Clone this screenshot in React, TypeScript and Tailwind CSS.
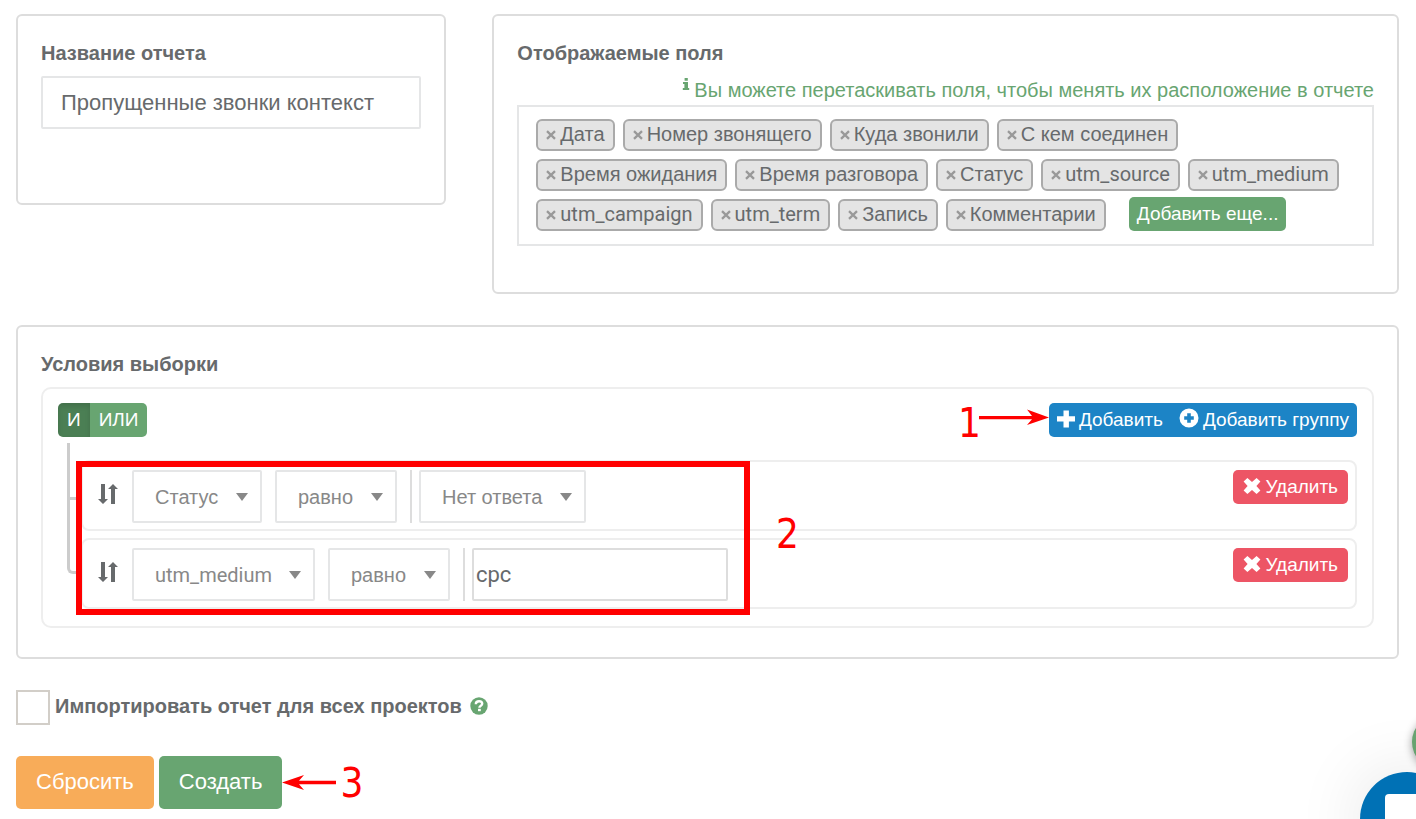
import React, { useState } from "react";

const initialFields = [
  "Дата",
  "Номер звонящего",
  "Куда звонили",
  "С кем соединен",
  "Время ожидания",
  "Время разговора",
  "Статус",
  "utm_source",
  "utm_medium",
  "utm_campaign",
  "utm_term",
  "Запись",
  "Комментарии",
];

const fieldFont = (field: string) =>
  field.startsWith("utm_") ? "font-[Roboto,sans-serif]" : "";

const PlusIcon = () => (
  <svg viewBox="0 0 18 18" className="mb-0.5 w-[18px] h-[18px]" fill="currentColor">
    <path d="M6.5 0.5h5.4v5.8H18v5.2h-6.1v6H6.5v-6H0V6.3h6.5z" />
  </svg>
);

const PlusCircleIcon = () => (
  <svg viewBox="0 0 20 20" className="mb-1 w-5 h-5" fill="currentColor">
    <path
      fillRule="evenodd"
      d="M10 0.5a9.5 9.5 0 1 1 0 19a9.5 9.5 0 0 1 0-19zM8.2 5.2v3H5.2v3.6h3v3h3.6v-3h3V8.2h-3v-3z"
    />
  </svg>
);

const RemoveIcon = () => (
  <svg viewBox="0 0 18 18" className="mb-0.5 w-[18px] h-[18px]" fill="currentColor">
    <path d="M4.4 1 9 5 13.6 1 17.4 4.6 13.4 9 17.4 13.4 13.6 17 9 13 4.4 17 0.6 13.4 4.6 9 0.6 4.6z" />
  </svg>
);

const CrossIcon = () => (
  <svg viewBox="0 0 10 10" className="w-2.5 h-2.5" fill="none" stroke="currentColor" strokeWidth="2.3">
    <path d="M1 1.2 9 8.8M9 1.2 1 8.8" />
  </svg>
);

const InfoIcon = () => (
  <svg viewBox="0 0 8 12" className="mt-0.5 w-2 h-3" fill="currentColor">
    <path d="M2.6 0h3.2v2.8H2.6zM1 4h5v6h1.2v2H0.8v-2H2.4V6H1z" />
  </svg>
);

const SortIcon = () => (
  <svg viewBox="0 0 20 22" className="w-5 h-[22px]" fill="currentColor">
    <path d="M3 1h4v15h3L5 21 0 16h3zM13 21h4V6h3L15 1 10 6h3z" />
  </svg>
);

const QuestionIcon = () => (
  <svg viewBox="0 0 18 18" className="w-[18px] h-[18px]">
    <circle cx="9" cy="9" r="8.7" fill="#68a571" />
    <path
      d="M5.8 7.2C5.8 5.2 7.2 4.2 9.1 4.2s3.1 1 3.1 2.6c0 2-2.8 1.9-2.8 3.9"
      fill="none"
      stroke="#fff"
      strokeWidth="2.4"
    />
    <path d="M8 11.8h2.8v2.4H8z" fill="#fff" />
  </svg>
);

interface DropdownProps {
  label: string;
  value: string;
}

const Dropdown: React.FC<DropdownProps> = ({ label, value }) => (
  <div className="relative">
    <select
      aria-label={label}
      defaultValue={value}
      className={`h-[53px] appearance-none rounded-xs border-2 border-[#e5e6e7] bg-white pl-[21px] pr-[41px] text-xl text-[#888] ${fieldFont(value)}`}>
      <option>{value}</option>
    </select>
    <svg
      viewBox="0 0 12 8"
      className="pointer-events-none absolute right-3.5 top-[23px] w-3 h-2"
      fill="#888">
      <path d="M0 0h12L6 8z" />
    </svg>
  </div>
);

interface RuleProps {
  field: string;
  children: React.ReactNode;
}

const Rule: React.FC<RuleProps> = ({ field, children }) => (
  <div className="flex items-start rounded-lg border-2 border-[#eee] pt-2 pb-1.5 pl-[15px] pr-[7px]">
    <button aria-label="Переместить" className="mt-[13px] mr-3.5 text-[#676a6c]">
      <SortIcon />
    </button>
    <div className="flex">
      <Dropdown label="Поле" value={field} />
      <div className="ml-[13px]">
        <Dropdown label="Оператор" value="равно" />
      </div>
      <div className="ml-[13px] border-l-2 border-[#ddd] pl-[7px]">{children}</div>
    </div>
    <button className="ml-auto flex h-[34px] items-center gap-1 rounded-[5px] bg-[#ed5565] px-2.5 text-[19px] text-white">
      <RemoveIcon />
      Удалить
    </button>
  </div>
);

const App: React.FC = () => {
  const [name, setName] = useState("Пропущенные звонки контекст");
  const [fields, setFields] = useState(initialFields);
  const [query, setQuery] = useState("cpc");

  const removeField = (field: string) => {
    setFields(fields.filter((item) => item !== field));
  };

  return (
    <div className="relative pt-3.5 pb-2.5 pl-4 pr-[17px] font-['Liberation_Sans',Arial,sans-serif] text-xl text-[#676a6c]">
      <div className="grid grid-cols-12 items-start gap-[46px]">
        {/* Название */}
        <section className="col-span-4 rounded-md border-2 border-[#ddd] px-[23px] pt-[22px] pb-[74px]">
          <label htmlFor="name" className="mb-2 block font-bold leading-[30px]">
            Название отчета
          </label>
          <input
            id="name"
            type="text"
            value={name}
            onChange={(e) => setName(e.target.value)}
            className="block h-[53px] w-full rounded-xs border-2 border-[#e5e6e7] px-[18px] text-[22px]"
          />
        </section>

        {/* Поля */}
        <section className="col-span-8 rounded-md border-2 border-[#ddd] px-[23px] pt-[22px] pb-[46px]">
          <h2 className="mb-2 font-bold leading-[30px]">Отображаемые поля</h2>
          <p className="flex justify-end gap-1 leading-[29px] text-[#68a571]">
            <InfoIcon />
            Вы можете перетаскивать поля, чтобы менять их расположение в отчете
          </p>
          <ul className="flex flex-wrap gap-2 border-2 border-[#e5e6e7] pt-3 pb-[13px] px-[17px]">
            {fields.map((field) => (
              <li
                key={field}
                className="flex h-8 gap-1 rounded-md border-2 border-[#aaa] bg-[#e4e4e4] px-2 leading-[26px]">
                <button
                  aria-label={`Убрать ${field}`}
                  onClick={() => removeField(field)}
                  className="text-[#999]">
                  <CrossIcon />
                </button>
                <span className={fieldFont(field)}>{field}</span>
              </li>
            ))}
            <li className="-mt-0.5 ml-[15px]">
              <button className="h-[34px] rounded-[5px] bg-[#68a571] px-2 text-[19px] text-white">
                Добавить еще...
              </button>
            </li>
          </ul>
        </section>
      </div>

      {/* Условия */}
      <section className="mt-[31px] rounded-md border-2 border-[#ddd] px-[23px] pt-[22px] pb-[29px]">
        <h2 className="mb-2 font-bold leading-[30px]">Условия выборки</h2>
        <div className="rounded-[10px] border-2 border-[#eee] px-[15px] pt-3.5 pb-[17px]">
          <div className="flex justify-between">
            <div className="flex overflow-hidden rounded-[5px] text-[19px] text-white">
              <button className="h-[34px] bg-[#4b7f54] px-[9px] inset-shadow-[0_3px_5px_#00000020]">И</button>
              <button className="h-[34px] bg-[#68a571] px-[9px]">ИЛИ</button>
            </div>
            <div className="relative flex rounded-[5px] bg-[#1c84c6] text-[19px] text-white">
              <button className="flex h-[34px] items-center gap-1 px-2">
                <PlusIcon />
                Добавить
              </button>
              <button className="flex h-[34px] items-center gap-1 px-2">
                <PlusCircleIcon />
                Добавить группу
              </button>
              <div className="absolute right-full top-0 flex text-[#f00]">
                <span className="font-['DejaVu_Sans_Condensed','DejaVu_Sans',sans-serif] text-[40px] leading-10">1</span>
                <svg viewBox="0 0 72 16" className="-ml-1 mt-1.5 w-[72px] h-4" fill="currentColor">
                  <path d="M2 7h53L50 0.5 72 8.5 50 16 55 10.2H2z" />
                </svg>
              </div>
            </div>
          </div>

          <div className="relative mt-[23px] ml-[23px] flex flex-col gap-[7px]">
            {/* линии дерева */}
            <div className="absolute -left-3.5 -top-[17px] h-[131px] w-3.5 rounded-bl-md border-b-3 border-l-3 border-[#ccc]" />
            <div className="absolute -left-3.5 top-[37px] w-3.5 border-t-3 border-[#ccc]" />
            <Rule field="Статус">
              <Dropdown label="Значение" value="Нет ответа" />
            </Rule>
            <Rule field="utm_medium">
              <input
                type="text"
                aria-label="Значение"
                value={query}
                onChange={(e) => setQuery(e.target.value)}
                className="block h-[53px] w-64 rounded-xs border-2 border-[#ddd] px-0.5 font-[Roboto,sans-serif] text-[22px]"
              />
            </Rule>
            <div className="pointer-events-none absolute -left-[5px] top-px h-[154px] w-[674px] border-6 border-[#f00]" />
            <span className="absolute left-[695px] top-[54px] font-['DejaVu_Sans_Condensed','DejaVu_Sans',sans-serif] text-[40px] leading-10 text-[#f00]">
              2
            </span>
          </div>
        </div>
      </section>

      <div className="mt-[31px] flex">
        <input
          id="all-projects"
          type="checkbox"
          className="mr-[5px] h-[35px] w-[34px] appearance-none border-2 border-[#d2cec8] bg-white"
        />
        <div className="flex h-8 items-center gap-2">
          <label htmlFor="all-projects" className="font-bold">
            Импортировать отчет для всех проектов
          </label>
          <QuestionIcon />
        </div>
      </div>

      <div className="mt-[31px] flex items-center gap-[5px] text-[22px] text-white">
        <button className="h-[53px] rounded-[5px] bg-[#f8ac59] px-5">Сбросить</button>
        <button className="h-[53px] rounded-[5px] bg-[#68a571] px-5">Создать</button>
        <div className="-ml-[5px] flex items-center text-[#f00]">
          <svg viewBox="0 0 54 16" className="w-[54px] h-4" fill="currentColor">
            <path d="M54 5.8H17L22 0 0 7.5 22 15 17 9.2H54z" />
          </svg>
          <span className="ml-1 font-['DejaVu_Sans_Condensed','DejaVu_Sans',sans-serif] text-[40px] leading-9">3</span>
        </div>
      </div>

      {/* чат */}
      <div className="fixed -right-[52px] bottom-[49px] h-14 w-14 rounded-full bg-[#68a571] shadow-[0_2px_8px_#00000060]" />
      <button
        aria-label="Чат"
        className="fixed -right-[38px] -bottom-[47px] flex h-[94px] w-[94px] items-start rounded-full bg-[#0071b5] pt-[22px] pl-[25px] shadow-[0_0_70px_#0000001c]">
        <span className="h-12 w-12 rounded-sm bg-white" />
      </button>
    </div>
  );
};

export default App;
